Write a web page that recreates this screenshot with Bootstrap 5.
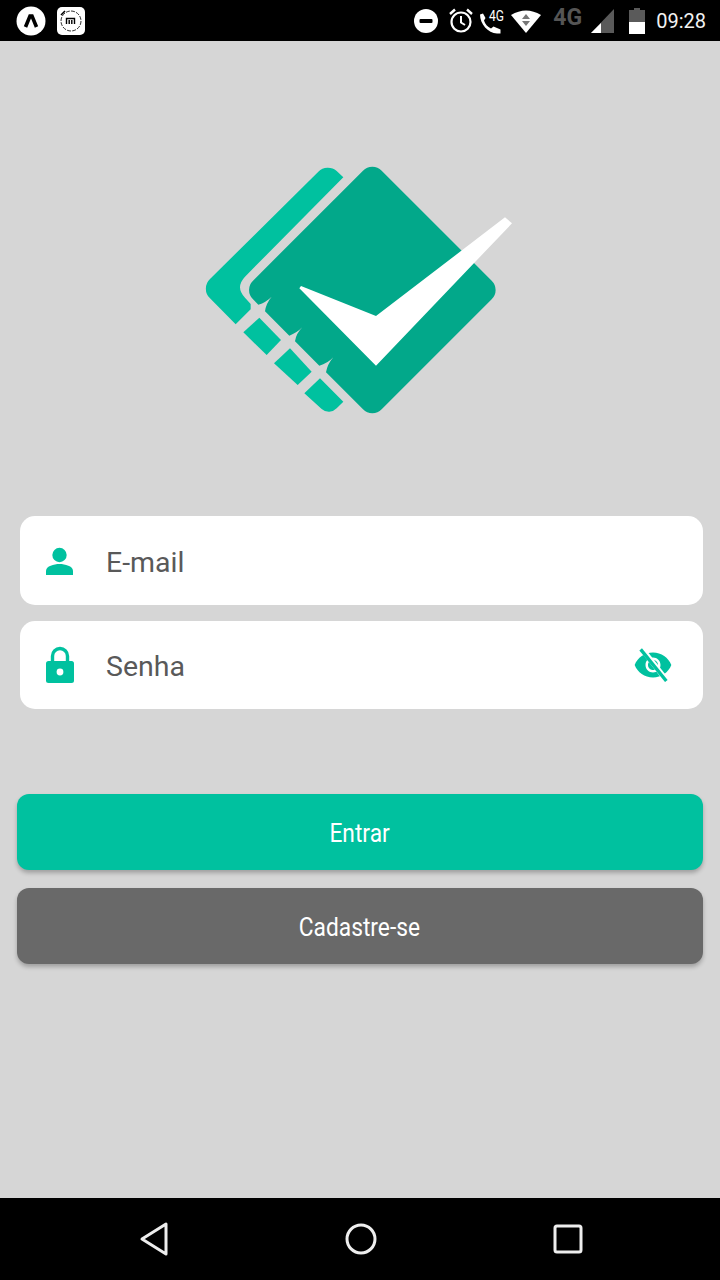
<!DOCTYPE html>
<html lang="pt-BR">
<head>
    <meta charset="UTF-8">
    <title>Login</title>
    <link href="https://cdn.jsdelivr.net/npm/bootstrap@5.3.0/dist/css/bootstrap.min.css" rel="stylesheet">
    <style>
        body {
            background-color: #d6d6d6;
            font-family: Roboto, "Liberation Sans", sans-serif;
        }
        .phone-screen {
            width: 720px;
            height: 1280px;
        }
        .status-bar {
            height: 41px;
            background: #000;
            color: #fff;
            padding: 0 14px 0 16px;
        }
        .mi-icon {
            margin-left: 2px;
        }
        .alarm-icon {
            margin-left: 10px;
        }
        .call-icon {
            margin-left: 3px;
        }
        .wifi-icon {
            margin-left: 2px;
        }
        .status-net {
            font-size: 23px;
            font-weight: 700;
            color: #555;
            line-height: 1;
            margin: -6px 9px 0 12px;
        }
        .battery-icon {
            margin-left: 14px;
        }
        .status-time {
            font-size: 20px;
            line-height: 1;
            margin-left: 11px;
            color: #f2f2f2;
        }
        .logo-wrap {
            padding-top: 114px;
            height: 475px;
        }
        .field-box {
            background: #fff;
            border-radius: 15px;
            height: 89px;
            margin: 0 17px 16px 20px;
            padding: 0 30px 0 25px;
            color: #595959;
            font-size: 28.5px;
        }
        .field-box.field-pass {
            height: 88px;
            margin-bottom: 0;
        }
        .field-box svg.lead-icon {
            width: 30px;
            margin-right: 31px;
        }
        .field-label {
            padding-top: 5px;
        }
        .action-btn {
            height: 76px;
            border-radius: 12px;
            border: 0;
            color: #fff;
            font-size: 26px;
            box-shadow: 0 3px 4px rgba(0, 0, 0, .25);
        }
        .action-btn span {
            display: inline-block;
            padding: 2px 2px 0 0;
            transform: scaleX(.875);
        }
        .action-btn.enter-btn {
            background: #00c19f;
            margin-top: 85px;
        }
        .action-btn.signup-btn {
            background: #696969;
            margin-top: 18px;
        }
        .btn-col {
            margin: 0 17px;
        }
        .bottom-nav {
            height: 82px;
            background: #000;
            padding: 0 137px 0 139px;
        }
    </style>
</head>
<body>
    <div class="phone-screen d-flex flex-column">
        <!-- barra de status -->
        <div class="status-bar d-flex align-items-center justify-content-between">
            <div class="d-flex align-items-center gap-2">
                <svg width="30" height="30" viewBox="0 0 30 30">
                    <circle cx="15" cy="15" r="14.5" fill="#fff"/>
                    <path d="M9.5 21 L14 10 H16 L20.5 21" fill="none" stroke="#000" stroke-width="3.6"/>
                </svg>
                <svg width="30" height="30" viewBox="0 0 30 30" class="mi-icon">
                    <rect x="1" y="1" width="28" height="28" rx="5" fill="#fff"/>
                    <circle cx="15" cy="15" r="10" fill="none" stroke="#333" stroke-width="1" stroke-dasharray="4 1.2"/>
                    <path d="M5 9 L9 5" stroke="#000" stroke-width="1.6"/>
                    <path d="M10.5 18 v-5.5 h8 v5.5 M13.2 18 v-4 M15.8 18 v-4" fill="none" stroke="#000" stroke-width="1.4"/>
                </svg>
            </div>
            <div class="d-flex align-items-center">
                <svg width="24" height="24" viewBox="0 0 24 24">
                    <circle cx="12" cy="12" r="12" fill="#fff"/>
                    <rect x="5.5" y="10" width="13" height="4" rx="1" fill="#000"/>
                </svg>
                <svg width="26" height="28" viewBox="0 0 26 28" class="alarm-icon">
                    <circle cx="13" cy="15" r="9.5" fill="none" stroke="#fff" stroke-width="2.2"/>
                    <path d="M13 9 v6.5 l4 2.5" fill="none" stroke="#fff" stroke-width="2"/>
                    <path d="M2 7 L7 2.5 M24 7 L19 2.5" stroke="#fff" stroke-width="2.4"/>
                </svg>
                <svg width="32" height="30" viewBox="0 0 32 30" class="call-icon">
                    <path d="M3 8.5 L6 7.5 L8.5 12 L7 14.5 C8 18 10.5 21 14 22.5 L16.5 20.5 L23.5 23.5 V27.5 L20 27.5 C11 27 3 18 3 8.5 Z" fill="#fff"/>
                    <text x="12" y="15" font-size="15" fill="#fff" font-family="Roboto, sans-serif" textLength="15" lengthAdjust="spacingAndGlyphs">4G</text>
                </svg>
                <svg width="30" height="24" viewBox="0 0 30 24" class="wifi-icon">
                    <path d="M0 6 Q15 -3 30 6 L15 24 Z" fill="#fff"/>
                    <path d="M15 5 L19 10 H11 Z M11 12 H19 L15 17 Z" fill="#777"/>
                </svg>
                <span class="status-net">4G</span>
                <svg width="24" height="24" viewBox="0 0 24 24">
                    <path d="M23 0 V24 H0 Z" fill="#5a5a5a"/>
                    <path d="M10 14 V24 H0 Z" fill="#fff"/>
                </svg>
                <svg width="16" height="26" viewBox="0 0 16 26" class="battery-icon">
                    <path d="M5 0 H11 V2 H16 V14 H0 V2 H5 Z" fill="#5a5a5a"/>
                    <rect y="14" width="16" height="12" fill="#fff"/>
                </svg>
                <span class="status-time">09:28</span>
            </div>
        </div>

        <div class="flex-grow-1 d-flex flex-column">
            <!-- logo -->
            <div class="logo-wrap d-flex justify-content-center">
                <svg width="340" height="270" viewBox="0 0 1020 810">
                    <path fill="#00c19f" d="M385 50 A40 40 0 0 1 440 48 L460 67 L165 365 Q135 397 165 428 L182 447 V463 L137 508 L60 430 A40 40 0 0 1 60 372 Z"/>
                    <path fill="#00c19f" d="M208 488 L273 555 L230 600 L160 532 Z"/>
                    <path fill="#00c19f" d="M300 580 L365 650 L323 690 L252 625 Z"/>
                    <path fill="#00c19f" d="M390 670 L460 740 L440 760 A32 32 0 0 1 395 762 L343 715 Z"/>
                    <path fill="#02a88a" d="M519 47 A39 39 0 0 1 575 47 L905 377 A39 39 0 0 1 905 433 L575 763 A39 39 0 0 1 519 763 L408 652 Q412 628 430 607 Q412 626 388 632 L315 559 Q318 536 337 517 Q320 534 298 542 L225 469 Q228 445 245 425 Q228 442 205 449 L189 433 A39 39 0 0 1 189 377 Z"/>
                    <path fill="#fff" d="M333 393 L558 483 L945 187 L966 205 L558 632 L328 400 Z"/>
                </svg>
            </div>

            <!-- campos -->
            <div class="field-box d-flex align-items-center">
                <svg class="lead-icon" viewBox="0 0 30 30" height="30">
                    <circle cx="14.5" cy="9" r="7.2" fill="#00c19f"/>
                    <path d="M1 29 v-4 c0-5 8-7 13.5-7 s13.5 2 13.5 7 v4 z" fill="#00c19f"/>
                </svg>
                <span class="field-label">E-mail</span>
            </div>
            <div class="field-box field-pass d-flex align-items-center">
                <svg class="lead-icon" viewBox="0 0 30 38" height="38">
                    <path d="M7.5 16 v-6 a7.5 7.5 0 0 1 15 0 v6" fill="none" stroke="#00c19f" stroke-width="3.4"/>
                    <rect x="1" y="15" width="28" height="22" rx="2.5" fill="#00c19f"/>
                    <circle cx="15" cy="26" r="3.4" fill="#fff"/>
                </svg>
                <span class="field-label">Senha</span>
                <svg class="ms-auto" width="40" height="40" viewBox="0 0 24 24">
                    <path fill="#00c19f" d="M12 4.5C7 4.5 2.73 7.61 1 12c1.73 4.39 6 7.5 11 7.5s9.27-3.11 11-7.5c-1.73-4.39-6-7.5-11-7.5zM12 16.5c-2.5 0-4.5-2-4.5-4.5s2-4.5 4.5-4.5 4.5 2 4.5 4.5-2 4.5-4.5 4.5zm0-7.5c-1.66 0-3 1.34-3 3s1.34 3 3 3 3-1.34 3-3-1.34-3-3-3z"/>
                    <path d="M5.5 2.5 L20 21" stroke="#fff" stroke-width="3.2"/>
                    <path d="M4.6 2.6 L20 21.6" stroke="#00c19f" stroke-width="2"/>
                </svg>
            </div>

            <!-- botoes -->
            <div class="btn-col d-flex flex-column">
                <button type="button" class="btn action-btn enter-btn"><span>Entrar</span></button>
                <button type="button" class="btn action-btn signup-btn"><span>Cadastre-se</span></button>
            </div>
        </div>

        <!-- navegacao do android -->
        <div class="bottom-nav d-flex align-items-center justify-content-between">
            <svg width="30" height="36" viewBox="0 0 30 36">
                <path d="M27 3 V33 L3 18 Z" fill="none" stroke="#eee" stroke-width="3" stroke-linejoin="round"/>
            </svg>
            <svg width="34" height="34" viewBox="0 0 34 34">
                <circle cx="17" cy="17" r="14" fill="none" stroke="#eee" stroke-width="3"/>
            </svg>
            <svg width="30" height="30" viewBox="0 0 30 30">
                <rect x="2" y="2" width="26" height="26" rx="2" fill="none" stroke="#eee" stroke-width="3"/>
            </svg>
        </div>
    </div>
    <script src="https://cdn.jsdelivr.net/npm/bootstrap@5.3.0/dist/js/bootstrap.bundle.min.js"></script>
</body>
</html>
